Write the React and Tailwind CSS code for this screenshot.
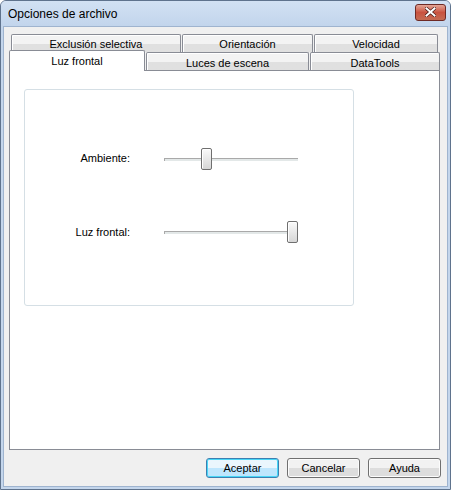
import React from 'react'

const font = { fontFamily: '"Liberation Sans", Arial, sans-serif' }

function Tab({ label, w, selected, className = '' }) {
  return (
    <div
      className={
        'flex justify-center border-[#898c95] border-t border-x rounded-t-[2px] text-[11px] leading-[14px] text-black ' +
        (selected
          ? 'bg-white h-[21px] pt-[3px] relative z-10 -mb-px'
          : 'bg-gradient-to-b from-[#f3f3f3] from-50% to-[#e0e0e0] to-50% h-[18px] shadow-[inset_1px_1px_0_#fff]') +
        ' ' + className
      }
      style={{ width: w }}
    >
      {label}
    </div>
  )
}

function Slider({ pos }) {
  return (
    <div className="relative w-[134px] h-[22px]">
      <div className="absolute left-0 right-0 top-[10px] h-[3px] border-t border-[#a9a9a9] bg-[#e3e8e8] border-l" />
      <div
        className="absolute top-0 w-[11px] h-[22px] rounded-[2px] border border-[#6f6f6f] bg-gradient-to-b from-[#fafafa] to-[#d6d6d6] shadow-[inset_1px_1px_0_#fff]"
        style={{ left: pos }}
      />
    </div>
  )
}

function Button({ label, primary }) {
  return (
    <div
      className={
        'w-[73px] h-[20px] flex items-center justify-center rounded-[3px] border text-[11px] text-black ' +
        (primary
          ? 'border-[#3c7fb1] bg-gradient-to-b from-[#eaf6fd] from-50% to-[#bee6fd] to-50% shadow-[inset_0_0_0_1px_#48d6f6]'
          : 'border-[#707070] bg-gradient-to-b from-[#f2f2f2] from-50% to-[#dddddd] to-50% shadow-[inset_0_0_0_1px_#fcfcfc]')
      }
    >
      {label}
    </div>
  )
}

export default function App() {
  return (
    <div style={font} className="w-[451px] h-[490px] bg-[#c4d6ec] border border-[#5f738d] rounded-t-[6px] flex flex-col overflow-hidden">
      {/* title bar */}
      <div className="h-[25px] shrink-0 flex items-center justify-between pl-[7px] pr-[4px] bg-gradient-to-b from-[#d2e1f3] to-[#c2d5ec]">
        <span className="text-[12px] text-black mt-[1px]">Opciones de archivo</span>
        <div className="w-[31px] h-[17px] mt-[-3px] rounded-[3px] border border-[#6e2a25] bg-gradient-to-b from-[#e3a597] via-[#c9523f] to-[#c46b52] flex items-center justify-center">
          <svg width="11" height="10" viewBox="0 0 11 10">
            <path d="M1.5 1.5 L9.5 8.5 M9.5 1.5 L1.5 8.5" stroke="#4a1d18" strokeWidth="3.4" strokeLinecap="square" />
            <path d="M1.5 1.5 L9.5 8.5 M9.5 1.5 L1.5 8.5" stroke="#fff" strokeWidth="2" strokeLinecap="square" />
          </svg>
        </div>
      </div>

      {/* body */}
      <div className="flex-1 mx-[2px] mb-[2px] border border-[#9fb4cf] bg-[#f0f0f0] flex flex-col px-[5px] pt-[7px]">
        {/* tabs */}
        <div className="flex gap-px pl-[2px]">
          <Tab label="Exclusión selectiva" w={170} className="pt-[2px]" />
          <Tab label="Orientación" w={131} className="pt-[2px]" />
          <Tab label="Velocidad" w={124} className="pt-[2px]" />
        </div>
        <div className="flex items-end gap-px -mt-[2px]">
          <Tab label="Luz frontal" w={136} selected />
          <Tab label="Luces de escena" w={163} className="pt-[3px]" />
          <Tab label="DataTools" w={130} className="pt-[3px]" />
        </div>

        {/* pane */}
        <div className="w-[431px] h-[380px] border border-[#898c95] bg-white pl-[14px] pt-[18px]">
          <div className="w-[330px] h-[217px] border border-[#d5dfe5] rounded-[3px] flex flex-col pt-[58px] gap-[51px]">
            <div className="flex items-center">
              <span className="w-[105px] text-right text-[11px] text-black -mt-[2px]">Ambiente:</span>
              <div className="ml-[34px]">
                <Slider pos={37} />
              </div>
            </div>
            <div className="flex items-center">
              <span className="w-[105px] text-right text-[11px] text-black">Luz frontal:</span>
              <div className="ml-[34px]">
                <Slider pos={123} />
              </div>
            </div>
          </div>
        </div>

        {/* buttons */}
        <div className="flex justify-end gap-[8px] mt-[8px] pr-[1px]">
          <Button label="Aceptar" primary />
          <Button label="Cancelar" />
          <Button label="Ayuda" />
        </div>
      </div>
    </div>
  )
}
